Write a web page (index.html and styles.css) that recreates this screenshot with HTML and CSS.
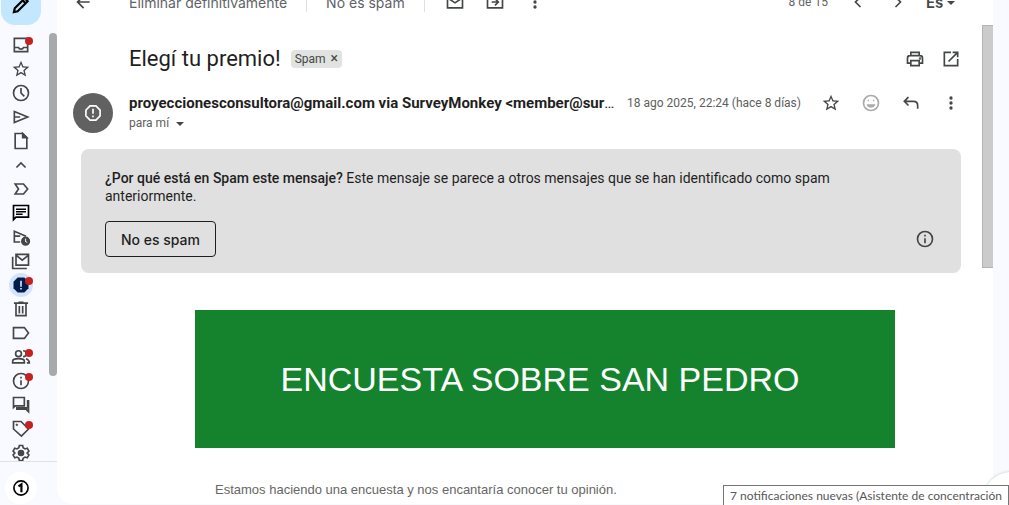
FILE: index.html
```html
<!DOCTYPE html>
<html lang="es">
<head>
    <meta charset="UTF-8">
    <meta name="viewport" content="width=device-width, initial-scale=1.0">
    <title>Elegí tu premio!</title>
    <link rel="stylesheet" href="styles.css">
</head>
<body>
    <!-- barra lateral -->
    <aside class="rail">
        <button class="compose" aria-label="Redactar">
            <svg class="icon" viewBox="0 0 24 24"><path d="M3.5 20.5l1-4.5L16.5 4l3.5 3.5L8 19.5z M14 6.5l3.5 3.5" fill="none" stroke="#000" stroke-width="2.6"/></svg>
        </button>
        <nav class="folders">
            <a href="#" class="unread" aria-label="Recibidos"><svg class="icon line" viewBox="0 0 24 24"><path d="M4 4h16v16H4zM4 15h5c.5 1.5 1.5 2 3 2s2.5-.5 3-2h5"/></svg></a>
            <a href="#" aria-label="Destacados"><svg class="icon" viewBox="0 0 24 24"><path d="M22 9.24l-7.19-.62L12 2 9.19 8.63 2 9.24l5.46 4.73L5.82 21 12 17.27 18.18 21l-1.63-7.03L22 9.24zM12 15.4l-3.76 2.27 1-4.28-3.32-2.88 4.38-.38L12 6.1l1.71 4.04 4.38.38-3.32 2.88 1 4.28L12 15.4z"/></svg></a>
            <a href="#" aria-label="Pospuestos"><svg class="icon line" viewBox="0 0 24 24"><circle cx="12" cy="12" r="9"/><path d="M12 6v6l4 4"/></svg></a>
            <a href="#" aria-label="Enviados"><svg class="icon line" viewBox="0 0 24 24"><path d="M4 5.5L20 12 4 18.5zM4 12h7"/></svg></a>
            <a href="#" aria-label="Borradores"><svg class="icon line" viewBox="0 0 24 24"><path d="M5 3h9l5 5v13H5z"/><path d="M14 3v5h5z" fill="#444746"/></svg></a>
            <a href="#" aria-label="Menos"><svg class="icon line" viewBox="0 0 24 24"><path d="M6.5 15l5.5-5.500 5.500 5.500"/></svg></a>
            <a href="#" aria-label="Importantes"><svg class="icon line" viewBox="0 0 24 24"><path d="M5 6h10l5 6-5 6H5l4-6z"/></svg></a>
            <a href="#" aria-label="Chats"><svg class="icon line dark" viewBox="0 0 24 24"><path d="M3 20V3h18v14H6zM6 7.5h12M6 10.5h12M6 13.5h8"/></svg></a>
            <a href="#" aria-label="Programados"><svg class="icon line" viewBox="0 0 24 24"><path d="M11 18H4V5l14 6M4 11h7"/><circle cx="17.5" cy="17" r="4.5" fill="#444746"/><path d="M17.5 14v3.5l2 1" stroke="#f8faff" stroke-width="1.2"/></svg></a>
            <a href="#" aria-label="Todos"><svg class="icon line" viewBox="0 0 24 24"><path d="M6 4h15v13H6zM6 5l7.5 6L21 5M2 7v14h17"/></svg></a>
            <a href="#" class="unread current" aria-label="Spam"><svg class="icon" viewBox="0 0 24 24"><path d="M8 3h8l5 5v8l-5 5H8l-5-5V8z" fill="#001d4a"/><path d="M11 7h2v7h-2zM11 15.5h2v2h-2z" fill="#d3e3fd"/></svg></a>
            <a href="#" aria-label="Papelera"><svg class="icon line" viewBox="0 0 24 24"><path d="M6 6v14h12V6M3.5 5h17M9 4h6M10 8.5v9M14 8.5v9"/></svg></a>
            <a href="#" aria-label="Categorías"><svg class="icon line" viewBox="0 0 24 24"><path d="M3 5.5h13l5 6.5-5 6.500H3z"/></svg></a>
            <a href="#" class="unread" aria-label="Social"><svg class="icon line" viewBox="0 0 24 24"><circle cx="9" cy="8" r="3.5"/><path d="M2 19v-2c0-2 4-3 7-3s7 1 7 3v2zM14.5 4.5c3 0 4 1.5 4 3.5s-1 3.5-4 3.5M18 14c3 1 4 2 4 5h-3"/></svg></a>
            <a href="#" class="unread" aria-label="Notificaciones"><svg class="icon line" viewBox="0 0 24 24"><circle cx="12" cy="12" r="9"/><path d="M12 11v6M12 7v2"/></svg></a>
            <a href="#" aria-label="Foros"><svg class="icon line" viewBox="0 0 24 24"><path d="M3 15V3h13v10H5zM21 7v13l-3-3H7v-1.5h13V7z"/></svg></a>
            <a href="#" class="unread" aria-label="Promociones"><svg class="icon line" viewBox="0 0 24 24"><path d="M3 3h9l9 9-8.5 8.5L3 12z"/><circle cx="7" cy="7" r="1" fill="#444746" stroke-width="1"/></svg></a>
            <a href="#" aria-label="Gestionar etiquetas"><svg class="icon line" viewBox="0 0 24 24"><path d="M10 3h4l.6 2.8 2.2 1.3 2.7-.9 2 3.5L19.4 12l2.1 2.3-2 3.5-2.7-.9-2.2 1.3L14 21h-4l-.6-2.8-2.2-1.3-2.7.9-2-3.5L4.6 12 2.5 9.7l2-3.5 2.7.9 2.2-1.3z"/><circle cx="12" cy="12" r="3" fill="#444746"/></svg></a>
        </nav>
        <div class="rail-foot">
            <button class="badge-one" aria-label="Complemento">
                <svg class="icon line dark" viewBox="0 0 24 24"><circle cx="12" cy="12" r="8.5"/><path d="M9 10l3.5-2.5V17" stroke-width="2.6"/></svg>
            </button>
        </div>
    </aside>
    <div class="rail-scroll"></div>

    <main class="panel">
        <div class="toolbar">
            <button class="tool back" aria-label="Volver"><svg class="icon" viewBox="0 0 24 24"><path d="M20 11H7.83l5.59-5.59L12 4l-8 8 8 8 1.41-1.41L7.83 13H20v-2z"/></svg></button>
            <button class="text-tool">Eliminar definitivamente</button>
            <span class="divider"></span>
            <button class="text-tool">No es spam</button>
            <span class="divider"></span>
            <div class="tools">
                <button class="tool" aria-label="Marcar como no leído"><svg class="icon line" viewBox="0 0 24 24"><path d="M3 5h18v14H3zM3 7l9 6 9-6"/></svg></button>
                <button class="tool" aria-label="Mover a"><svg class="icon line" viewBox="0 0 24 24"><path d="M3 5h18v14H3zM8 12h8M12 8l4 4-4 4"/></svg></button>
                <button class="tool" aria-label="Más"><svg class="icon" viewBox="0 0 24 24"><circle cx="12" cy="6" r="2"/><circle cx="12" cy="12" r="2"/><circle cx="12" cy="18" r="2"/></svg></button>
            </div>
            <span class="count">8 de 15</span>
            <button class="tool" aria-label="Más reciente"><svg class="icon line" viewBox="0 0 24 24"><path d="M15 6l-6 6 6 6"/></svg></button>
            <button class="tool" aria-label="Anterior"><svg class="icon line" viewBox="0 0 24 24"><path d="M9 6l6 6-6 6"/></svg></button>
            <button class="lang">Es <span class="caret"></span></button>
        </div>

        <div class="scroller">
            <article class="mail">
                <header class="subject">
                    <h1>Elegí tu premio!</h1>
                    <span class="chip">Spam <button aria-label="Quitar etiqueta">×</button></span>
                    <div class="subject-actions">
                        <button class="act" aria-label="Imprimir"><svg class="icon line" viewBox="0 0 24 24"><path d="M7 8V4h10v4M7 17H3v-6c0-2 1-3 3-3h12c2 0 3 1 3 3v6h-4M7 14h10v6H7z"/><circle cx="18" cy="11.5" r=".5"/></svg></button>
                        <button class="act" aria-label="Abrir en ventana nueva"><svg class="icon line" viewBox="0 0 24 24"><path d="M12 4H4v16h16v-8M14 4h6v6M20 4L9 15"/></svg></button>
                    </div>
                </header>

                <section class="sender">
                    <div class="avatar"><svg class="icon line" viewBox="0 0 24 24"><path d="M8.5 3.5h7l5 5v7l-5 5h-7l-5-5v-7zM12 7v6M12 15v2"/></svg></div>
                    <div class="who">
                        <div class="from-row">
                            <span class="from"><b>proyeccionesconsultora@gmail.com via SurveyMonkey &lt;member@sur</b>…</span>
                            <span class="date">18 ago 2025, 22:24 (hace 8 días)</span>
                            <div class="sender-actions">
                                <button class="act" aria-label="Destacar"><svg class="icon" viewBox="0 0 24 24"><path d="M22 9.24l-7.19-.62L12 2 9.19 8.63 2 9.24l5.46 4.73L5.82 21 12 17.27 18.18 21l-1.63-7.03L22 9.24zM12 15.4l-3.76 2.27 1-4.28-3.32-2.88 4.38-.38L12 6.1l1.71 4.04 4.38.38-3.32 2.88 1 4.28L12 15.4z"/></svg></button>
                                <button class="act faded" aria-label="Reaccionar"><svg class="icon line" viewBox="0 0 24 24"><circle cx="12" cy="12" r="9"/><path d="M8 14.5h8c-1 3-7 3-8 0zM8 9h1.5M14.5 9H16"/></svg></button>
                                <button class="act" aria-label="Responder"><svg class="icon line" viewBox="0 0 24 24"><path d="M9 5L4 10l5 5M4 10h11c3.5 0 5 2 5 5v4"/></svg></button>
                                <button class="act" aria-label="Más"><svg class="icon" viewBox="0 0 24 24"><circle cx="12" cy="6" r="2"/><circle cx="12" cy="12" r="2"/><circle cx="12" cy="18" r="2"/></svg></button>
                            </div>
                        </div>
                        <div class="to">para mí <span class="caret"></span></div>
                    </div>
                </section>

                <section class="notice">
                    <p><strong>¿Por qué está en Spam este mensaje?</strong> Este mensaje se parece a otros mensajes que se han identificado como spam anteriormente.</p>
                    <div class="notice-row">
                        <button class="outline">No es spam</button>
                        <button class="info" aria-label="Más información"><svg class="icon line" viewBox="0 0 24 24"><circle cx="12" cy="12" r="9"/><path d="M12 11v6M12 7v2"/></svg></button>
                    </div>
                </section>

                <div class="body">
                    <div class="survey">
                        <h2>ENCUESTA SOBRE SAN PEDRO</h2>
                        <p>Estamos haciendo una encuesta y nos encantaría conocer tu opinión.</p>
                    </div>
                </div>
            </article>
            <div class="thumb"></div>
        </div>
    </main>

    <div class="side-toggle"></div>
    <div class="tooltip" role="tooltip">7 notificaciones nuevas (Asistente de concentración</div>
</body>
</html>
```

FILE: styles.css
```css
* {
    box-sizing: border-box;
}
body {
    margin: 0;
    height: 100vh;
    display: flex;
    overflow: hidden;
    position: relative;
    background: #f8faff;
    font-family: Roboto, "Liberation Sans", sans-serif;
    font-size: 14px;
    color: #1f1f1f;
}
button {
    padding: 0;
    border: none;
    background: none;
    font: inherit;
    color: inherit;
    cursor: pointer;
}
.icon {
    display: block;
    width: 20px;
    height: 20px;
    fill: #444746;
}
.line {
    fill: none;
    stroke: #444746;
    stroke-width: 2;
}
.line.dark {
    stroke: #000;
}
.caret {
    display: inline-block;
    border: 4px solid transparent;
    border-top-color: #444746;
    border-bottom: none;
    vertical-align: middle;
}

/* barra lateral */
.rail {
    width: 49px;
    flex: none;
    display: flex;
    flex-direction: column;
}
.compose {
    width: 40px;
    height: 40px;
    flex: none;
    margin: -15px 0 8px 1px;
    border-radius: 14px;
    background: #c2e7ff;
    display: flex;
    align-items: center;
    justify-content: center;
}
.folders {
    flex: 1;
    min-height: 0;
    overflow: hidden;
}
.folders a {
    position: relative;
    display: flex;
    align-items: center;
    justify-content: center;
    width: 24px;
    height: 24px;
    margin-left: 9px;
    border-radius: 50%;
}
.folders .current {
    background: #d3e3fd;
}
.unread::after {
    content: "";
    position: absolute;
    top: 4px;
    right: 0;
    width: 8px;
    height: 8px;
    border-radius: 50%;
    background: #c5221f;
}
.rail-foot {
    flex: none;
    width: 57px;
    height: 44px;
    padding: 10px 0 0 5px;
    border-top: 1px solid #dfe1e5;
}
.badge-one {
    width: 32px;
    height: 32px;
    border-radius: 50%;
    background: #fff;
    display: flex;
    align-items: center;
    justify-content: center;
}
.rail-scroll {
    flex: none;
    width: 8px;
    height: 68%;
    margin-top: 33px;
    border-radius: 4px;
    background: #a8a9ad;
}

/* panel principal */
.panel {
    flex: 1;
    min-width: 0;
    display: flex;
    flex-direction: column;
    margin: 0 16px 1px 0;
    background: #fff;
    border-radius: 0 0 0 16px;
    overflow: hidden;
}
.toolbar {
    flex: none;
    display: flex;
    align-items: center;
    height: 48px;
    margin-top: -23px;
    padding: 2px 38px 0 6px;
    color: #5f6368;
    font-family: Inter, Roboto, sans-serif;
    white-space: nowrap;
}
.tool {
    width: 40px;
    height: 40px;
    display: flex;
    align-items: center;
    justify-content: center;
}
.back {
    margin-right: 26px;
}
.divider {
    width: 1px;
    height: 20px;
    margin: 0 19px;
    background: #e0e0e0;
}
.tools {
    display: flex;
    margin-left: -9px;
}
.count {
    margin-left: auto;
    margin-right: 10px;
    font-family: Roboto, sans-serif;
    font-size: 12px;
}
.lang {
    margin-left: 8px;
    color: #444746;
    font-weight: 600;
    font-size: 15px;
}
.scroller {
    flex: 1;
    min-height: 0;
    display: flex;
}
.mail {
    flex: 1;
    min-width: 0;
    padding: 0 21px 0 16px;
}
.thumb {
    width: 11px;
    height: 243px;
    background: #cbcbcb;
    border: 1px solid #b3b3b3;
    border-right: none;
}
.subject {
    display: flex;
    align-items: center;
    height: 68px;
    padding-left: 56px;
}
.subject h1 {
    margin: 0;
    font-size: 22px;
    line-height: 28px;
    font-weight: 400;
}
.chip {
    margin-left: 10px;
    padding: 0 4px;
    border-radius: 4px;
    background: #e1e3e1;
    color: #444746;
    font-size: 12px;
    line-height: 18px;
}
.chip button {
    margin-left: 2px;
    font-size: 14px;
    line-height: 16px;
}
.subject-actions {
    display: flex;
    gap: 16px;
    margin-left: auto;
}
.sender {
    display: flex;
    gap: 16px;
    height: 56px;
}
.avatar {
    flex: none;
    width: 40px;
    height: 40px;
    border-radius: 50%;
    background: #616161;
    display: flex;
    align-items: center;
    justify-content: center;
}
.avatar .icon {
    stroke: #fff;
}
.who {
    flex: 1;
    min-width: 0;
}
.from-row {
    display: flex;
    align-items: center;
    height: 20px;
}
.from {
    flex: 1;
    min-width: 0;
    overflow: hidden;
    font-size: 15px;
    white-space: nowrap;
}
.date {
    margin: 0 20px 0 12px;
    font-size: 12px;
    color: #5e5e5e;
    white-space: nowrap;
}
.sender-actions {
    display: flex;
    gap: 20px;
}
.faded .icon {
    stroke: #aaa;
}
.to {
    font-size: 12px;
    line-height: 20px;
    color: #5e5e5e;
}
.to .caret {
    margin-left: 4px;
}

/* aviso de spam */
.notice {
    margin-left: 8px;
    padding: 20px 24px 16px;
    border-radius: 8px;
    background: #e0e0e0;
}
.notice p {
    margin: 0 0 16px;
    padding-right: 48px;
    line-height: 18px;
}
.notice strong {
    font-weight: 500;
}
.notice-row {
    display: flex;
    align-items: center;
    justify-content: space-between;
}
.outline {
    height: 36px;
    padding: 0 15px;
    border: 1px solid #1f1f1f;
    border-radius: 4px;
    font-family: Inter, Roboto, sans-serif;
    font-weight: 500;
}
.info {
    padding: 2px;
}

/* cuerpo del correo */
.body {
    padding: 37px 0 0 56px;
    font-family: "Liberation Sans", Arial, sans-serif;
}
.survey {
    max-width: 700px;
    margin: 0 auto;
}
.survey h2 {
    margin: 0;
    padding: 50px 30px 50px 20px;
    background: #15832d;
    color: #fff;
    font-size: 34px;
    line-height: 38px;
    font-weight: 400;
    text-align: center;
}
.survey p {
    margin: 32px 20px 0;
    font-size: 13px;
    line-height: 20px;
    color: #666;
}

/* elementos flotantes */
.side-toggle {
    position: absolute;
    right: -30px;
    bottom: -23px;
    width: 56px;
    height: 56px;
    border-radius: 50%;
    background: #fff;
    box-shadow: 0 0 3px rgba(60, 64, 67, 0.3);
}
.tooltip {
    position: absolute;
    right: 0;
    bottom: -1px;
    padding: 0 6px;
    border: 1px solid #767676;
    background: #fff;
    color: #575757;
    font-family: Lato, "Open Sans", sans-serif;
    font-size: 12px;
    line-height: 19px;
    white-space: nowrap;
}
```
